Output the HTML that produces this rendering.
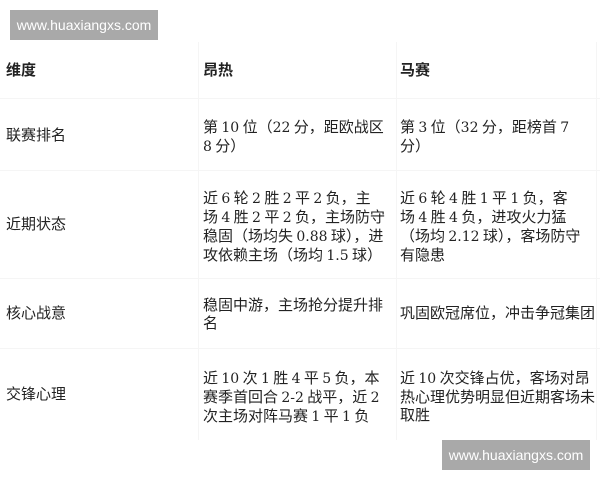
<!DOCTYPE html>
<html><head><meta charset="utf-8"><style>
body{margin:0;width:600px;height:480px;background:#fff;position:relative;overflow:hidden;font-family:"DejaVu Serif","Noto Sans CJK SC",sans-serif;color:#222;}
.wm{position:absolute;background:#a9a9a9;color:#fff;font-family:"Liberation Sans",sans-serif;font-size:14px;line-height:30px;text-align:center;}
.c{position:absolute;font-size:15px;line-height:18px;white-space:nowrap;font-family:"Noto Sans CJK SC",sans-serif;}
.n{font-family:"DejaVu Serif",serif;font-size:14px;}
.h{font-weight:bold;}
.l{position:absolute;background:#f5f5f5;}
</style></head><body>
<div class="wm" style="left:10px;top:10px;width:148px;height:30px;">www.huaxiangxs.com</div>
<div class="wm" style="left:442px;top:440px;width:148px;height:30px;">www.huaxiangxs.com</div>
<div class="l" style="left:0;top:98px;width:600px;height:1px"></div>
<div class="l" style="left:0;top:170px;width:600px;height:1px"></div>
<div class="l" style="left:0;top:278px;width:600px;height:1px"></div>
<div class="l" style="left:0;top:348px;width:600px;height:1px"></div>
<div class="l" style="left:198px;top:42px;width:1px;height:398px"></div>
<div class="l" style="left:396px;top:42px;width:1px;height:398px"></div>
<div class="l" style="left:596px;top:42px;width:1px;height:398px"></div>
<div class="c h" style="left:6px;top:61px">维度</div>
<div class="c h" style="left:203px;top:61px">昂热</div>
<div class="c h" style="left:400px;top:61px">马赛</div>
<div class="c" style="left:6px;top:126px">联赛排名</div>
<div class="c" style="left:203px;top:118px">第 <span class="n">10</span> 位（<span class="n">22</span> 分，距欧战区<br><span class="n">8</span> 分）</div>
<div class="c" style="left:400px;top:118px">第 <span class="n">3</span> 位（<span class="n">32</span> 分，距榜首 <span class="n">7</span><br>分）</div>
<div class="c" style="left:6px;top:215px">近期状态</div>
<div class="c" style="left:203px;top:189px">近 <span class="n">6</span> 轮 <span class="n">2</span> 胜 <span class="n">2</span> 平 <span class="n">2</span> 负，主<br>场 <span class="n">4</span> 胜 <span class="n">2</span> 平 <span class="n">2</span> 负，主场防守<br>稳固（场均失 <span class="n">0.88</span> 球），进<br>攻依赖主场（场均 <span class="n">1.5</span> 球）</div>
<div class="c" style="left:400px;top:189px">近 <span class="n">6</span> 轮 <span class="n">4</span> 胜 <span class="n">1</span> 平 <span class="n">1</span> 负，客<br>场 <span class="n">4</span> 胜 <span class="n">4</span> 负，进攻火力猛<br>（场均 <span class="n">2.12</span> 球），客场防守<br>有隐患</div>
<div class="c" style="left:6px;top:304px">核心战意</div>
<div class="c" style="left:203px;top:296px">稳固中游，主场抢分提升排<br>名</div>
<div class="c" style="left:400px;top:304px">巩固欧冠席位，冲击争冠集团</div>
<div class="c" style="left:6px;top:385px">交锋心理</div>
<div class="c" style="left:203px;top:369px">近 <span class="n">10</span> 次 <span class="n">1</span> 胜 <span class="n">4</span> 平 <span class="n">5</span> 负，本<br>赛季首回合 <span class="n">2-2</span> 战平，近 <span class="n">2</span><br>次主场对阵马赛 <span class="n">1</span> 平 <span class="n">1</span> 负</div>
<div class="c" style="left:400px;top:369px">近 <span class="n">10</span> 次交锋占优，客场对昂<br>热心理优势明显但近期客场未<br>取胜</div>
</body></html>
